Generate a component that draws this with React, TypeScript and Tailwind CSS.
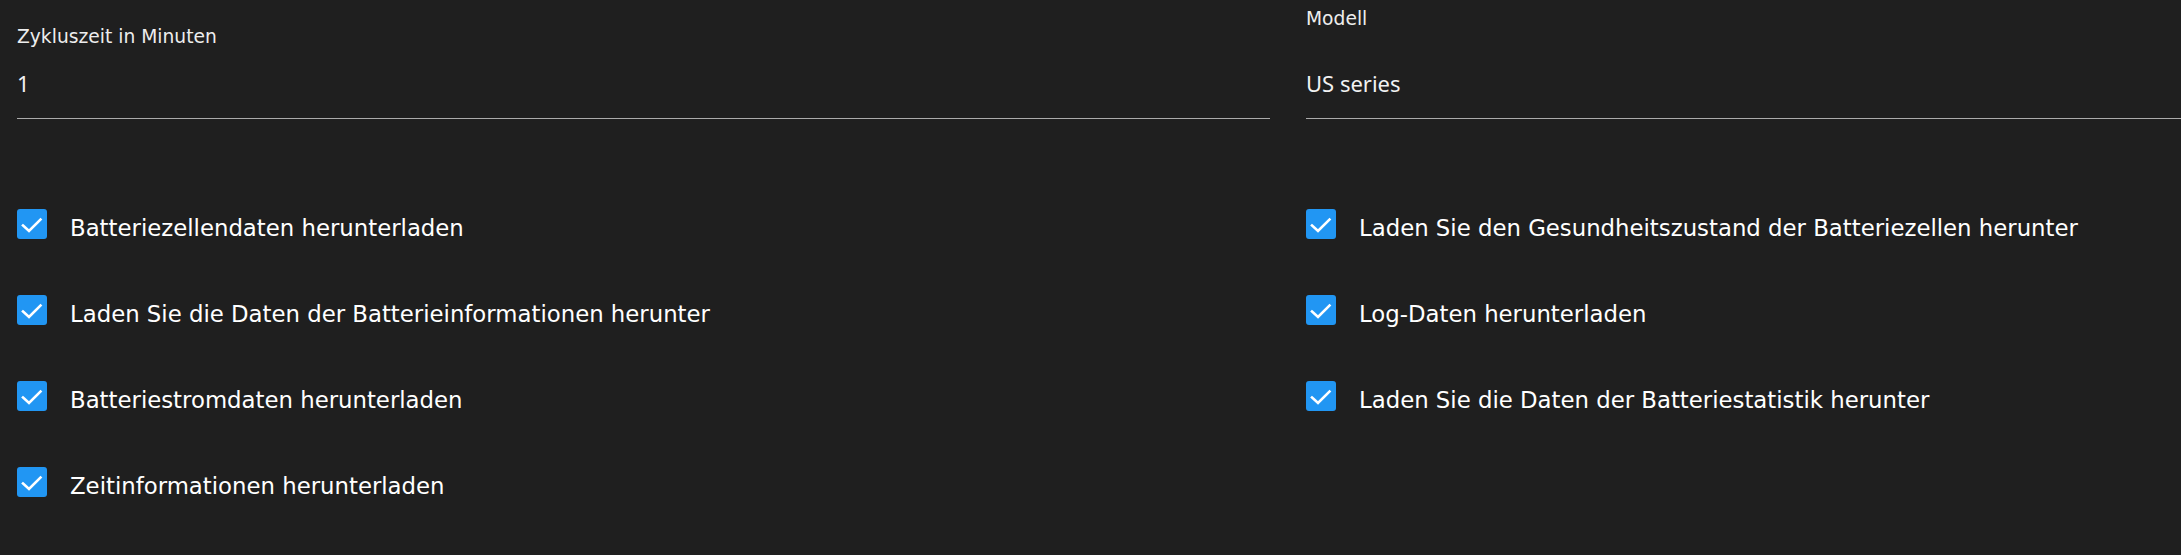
import React from "react";

const leftItems = [
  "Batteriezellendaten herunterladen",
  "Laden Sie die Daten der Batterieinformationen herunter",
  "Batteriestromdaten herunterladen",
  "Zeitinformationen herunterladen",
];

const rightItems = [
  "Laden Sie den Gesundheitszustand der Batteriezellen herunter",
  "Log-Daten herunterladen",
  "Laden Sie die Daten der Batteriestatistik herunter",
];

function CheckBox() {
  return (
    <span className="flex h-[30px] w-[30px] shrink-0 items-center justify-center rounded-[3px] bg-[#2196f3]">
      <svg width="30" height="30" viewBox="0 0 30 30" fill="none">
        <polyline
          points="6,16.5 12,22 23.5,10.5"
          stroke="#ffffff"
          strokeWidth="2.6"
          strokeLinecap="square"
          strokeLinejoin="miter"
        />
      </svg>
    </span>
  );
}

function Row({ label }: { label: string }) {
  return (
    <label className="flex h-[86px] items-center gap-[23px]">
      <CheckBox />
      <span className="pt-[8px] font-['DejaVu_Sans',sans-serif] text-[22.8px] leading-[27px] whitespace-nowrap text-white">
        {label}
      </span>
    </label>
  );
}

export default function App() {
  return (
    <div className="h-[555px] w-[2181px] overflow-hidden bg-[#1f1f1f]">
      <div className="grid grid-cols-[1253px_1253px] gap-x-[36px] pl-[17px]">
        <div className="flex flex-col">
          <div className="pt-[26px] font-['DejaVu_Sans',sans-serif] text-[18.7px] leading-[22px] text-[#ededed]">
            Zykluszeit in Minuten
          </div>
          <div className="mt-[20px] border-b border-[#ababab] pb-[20px] font-['Noto_Sans',sans-serif] text-[22px] leading-[30px] text-[#f2f2f2]">
            1
          </div>
          <div className="mt-[62px] flex flex-col">
            {leftItems.map((t) => (
              <Row key={t} label={t} />
            ))}
          </div>
        </div>
        <div className="flex flex-col">
          <div className="pt-[8px] font-['DejaVu_Sans',sans-serif] text-[18.7px] leading-[22px] text-[#ededed]">
            Modell
          </div>
          <div className="mt-[38px] border-b border-[#ababab] pb-[20px] font-['Noto_Sans',sans-serif] text-[22px] leading-[30px] text-[#f2f2f2]">
            US series
          </div>
          <div className="mt-[62px] flex flex-col">
            {rightItems.map((t) => (
              <Row key={t} label={t} />
            ))}
          </div>
        </div>
      </div>
    </div>
  );
}
